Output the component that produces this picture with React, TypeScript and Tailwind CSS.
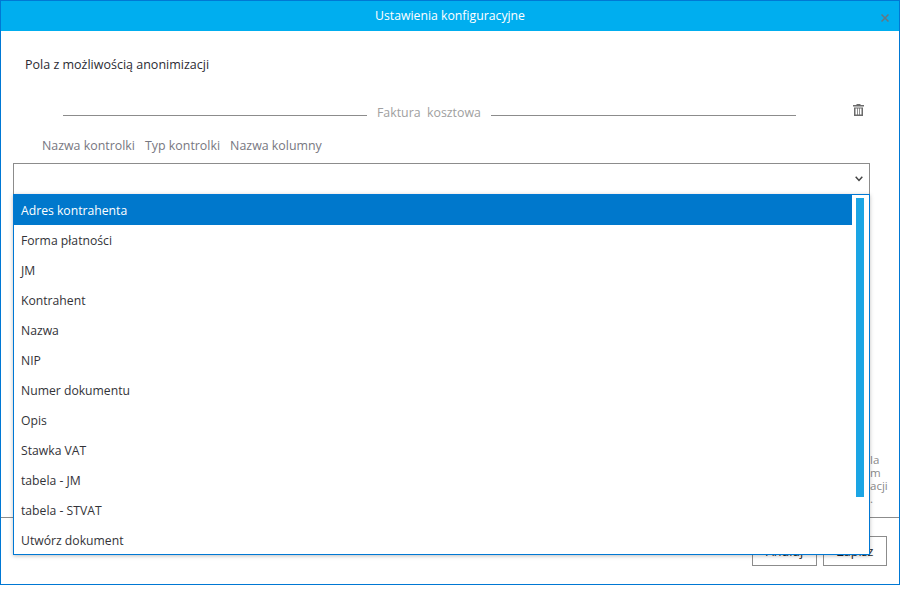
const options = [
  'Adres kontrahenta',
  'Forma płatności',
  'JM',
  'Kontrahent',
  'Nazwa',
  'NIP',
  'Numer dokumentu',
  'Opis',
  'Stawka VAT',
  'tabela - JM',
  'tabela - STVAT',
  'Utwórz dokument',
]

const font = { fontFamily: '"Open Sans", "Noto Sans", sans-serif' }

export default function App() {
  return (
    <div className="h-[592px] w-[900px] bg-white" style={font}>
      <div className="relative flex h-[585px] flex-col border border-[#0078d4]">
        {/* Header */}
        <div className="relative flex h-[30px] items-center justify-center bg-[#00aeef] text-[12.25px] text-white">
          Ustawienia konfiguracyjne
          <svg className="absolute right-[10px] top-[13px] h-[8px] w-[8px]" viewBox="0 0 8 8" fill="none" stroke="#667680" strokeWidth="1.5">
            <path d="M0.5 0.5 L7.5 7.5 M7.5 0.5 L0.5 7.5" />
          </svg>
        </div>

        {/* Content */}
        <div className="flex flex-1 flex-col">
          <p className="ml-[24px] mt-[26px] text-[12.5px] leading-[16px] text-[#2b2b33]">Pola z możliwością anonimizacji</p>

          <div className="mt-[31px] flex items-center pl-[62px] pr-[35px]">
            <div className="flex flex-1 items-center text-[12.35px] text-[#a0a0a0]">
              <span className="mt-[4px] h-px w-[304px] bg-[#8c8c8c]" />
              <span className="mx-[10px] whitespace-pre">Faktura  kosztowa</span>
              <span className="mt-[4px] h-px w-[305px] bg-[#8c8c8c]" />
            </div>
            <svg className="-mt-[6px] h-[12px] w-[11px]" viewBox="0 0 11 12" fill="#6b6b6b">
              <path d="M3.5 0h4v1H11v1.5H0V1h3.5z" />
              <path d="M1 3.5h9V12H1zM2.5 4.5v6H4v-6zM4.75 4.5v6h1.5v-6zM7 4.5v6h1.5v-6z" fillRule="evenodd" />
            </svg>
          </div>

          <div className="ml-[41px] mt-[15px] flex gap-[10px] text-[12.4px] leading-[16px] text-[#77777f]">
            <span>Nazwa kontrolki</span>
            <span>Typ kontrolki</span>
            <span>Nazwa kolumny</span>
          </div>

          <div className="relative ml-[12px] mt-[9px] w-[857px]">
            <div className="flex h-[31px] items-center justify-end border border-b-0 border-[#8c8c8c] bg-white pr-[6px]">
              <svg className="h-[6px] w-[8px]" viewBox="0 0 8 6" fill="none" stroke="#444" strokeWidth="1.5">
                <path d="M0.7 0.8 L4 4.4 L7.3 0.8" />
              </svg>
            </div>

            {/* Open list */}
            <div className="absolute left-0 top-[31px] z-10 flex h-[361px] w-[857px] overflow-hidden border border-[#0078d4] bg-white shadow-[0_1px_4px_rgba(0,0,0,0.25)]">
              <ul className="w-[838px] shrink-0 text-[12.2px] text-[#333338]">
                {options.map((o, i) => (
                  <li key={o} className={`flex h-[30px] items-center pl-[7px] pt-[4px] ${i === 0 ? 'bg-[#0078cc] text-white' : ''}`}>
                    {o}
                  </li>
                ))}
              </ul>
              <div className="ml-[4px] mt-[3px] h-[299px] w-[8px] bg-[#1ba5e4]" />
            </div>
          </div>

          {/* Partly covered note */}
          <div className="ml-auto mr-[11px] mt-[259px] w-[18px] text-[11.5px] leading-[13px] text-[#8a8a8a]">
            la
            <br />
            m
            <br />
            acji
            <br />.
          </div>
        </div>

        {/* Footer */}
        <div className="flex h-[67px] justify-end gap-[6px] border-t border-[#8c8c8c] pr-[12px] pt-[18px]">
          <button className="h-[30px] w-[65px] border border-[#8c8c8c] pt-[2px] text-[12.5px] text-[#1f1f27]">Anuluj</button>
          <button className="h-[30px] w-[64px] border border-[#8c8c8c] pt-[2px] text-[12.5px] text-[#1f1f27]">Zapisz</button>
        </div>
      </div>
    </div>
  )
}
